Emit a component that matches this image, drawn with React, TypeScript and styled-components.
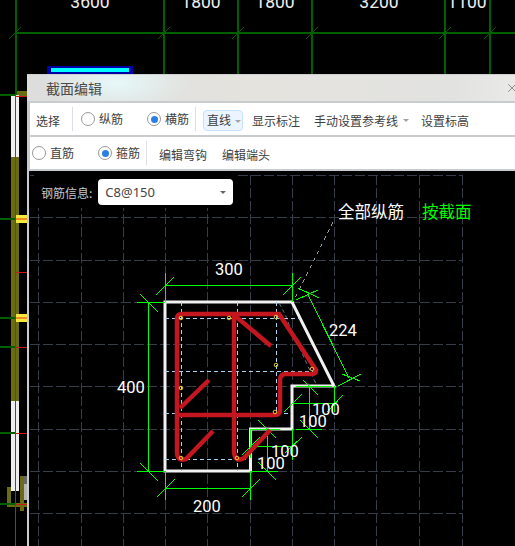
import React from "react";
import styled, { createGlobalStyle } from "styled-components";
import { X } from "lucide-react";

const GlobalStyle = createGlobalStyle`
  html, body { margin: 0; padding: 0; background: #000; }
  body { font-family: "Noto Sans CJK SC", "Noto Sans", sans-serif; overflow: hidden; }
`;

const Stage = styled.div`
  position: relative;
  width: 515px;
  height: 546px;
  overflow: hidden;
  background: #000;
`;

const Backdrop = styled.svg`
  position: absolute;
  inset: 0;
  display: block;
`;

const Dialog = styled.section`
  position: absolute;
  left: 27px;
  top: 74px;
  width: 500px;
  height: 472px;
  display: flex;
  flex-direction: column;
  background: #c9cccf;
`;

const TitleBar = styled.header`
  flex: 0 0 27px;
  display: flex;
  align-items: center;
  justify-content: space-between;
  padding: 0 8px 0 19px;
  background:
    radial-gradient(ellipse 75px 30px at 90px 8px, #e6f8f8 0%, rgba(230, 248, 248, 0) 100%),
    linear-gradient(90deg, #dcdddc 0%, #e4e3de 45%, #e2e2e0 85%, #ebebea 100%);
  border-top: 1px solid #cfcfcf;
  box-sizing: border-box;
  font-size: 14px;
  color: #4a4a4a;
`;

const CloseIcon = styled(X)`
  color: #777;
`;

const Toolbar = styled.div`
  flex: 0 0 32px;
  margin: 2px 0 0 3px;
  display: flex;
  align-items: center;
  background: #fff;
  color: #404040;
  font-size: 12px;
  line-height: 16px;
`;

const ToolLabel = styled.span<{ $ml: number }>`
  margin-left: ${(p) => p.$ml}px;
  position: relative;
  top: 2px;
  white-space: nowrap;
`;

const Divider = styled.i<{ $ml: number }>`
  flex: 0 0 1px;
  height: 24px;
  margin-left: ${(p) => p.$ml}px;
  background: #dcdfe3;
`;

const RadioItem = styled.label<{ $ml: number }>`
  display: flex;
  align-items: center;
  gap: 4px;
  margin-left: ${(p) => p.$ml}px;
  white-space: nowrap;
`;

const RadioMark = styled.span<{ $on?: boolean }>`
  width: 14px;
  height: 14px;
  box-sizing: border-box;
  border: 1px solid #9a9a9a;
  border-radius: 50%;
  background: #fff;
  display: flex;
  align-items: center;
  justify-content: center;
  &::after {
    content: "";
    width: 7px;
    height: 7px;
    border-radius: 50%;
    background: ${(p) => (p.$on ? "#2b7ee6" : "transparent")};
  }
`;

const Caret = styled.i<{ $ml: number }>`
  margin-left: ${(p) => p.$ml}px;
  width: 0;
  height: 0;
  position: relative;
  top: 1px;
  border-left: 3px solid transparent;
  border-right: 3px solid transparent;
  border-top: 3px solid #a3a3a3;
`;

const ModeButton = styled.button`
  width: 40px;
  height: 21px;
  margin-left: 7px;
  position: relative;
  top: 1px;
  padding: 0 0 0 3px;
  box-sizing: border-box;
  display: flex;
  align-items: center;
  border: 1px solid #c6e2ff;
  border-radius: 4px;
  background: #ecf5ff;
  color: #404040;
  font: inherit;
`;

const Canvas = styled.div`
  flex: 1;
  position: relative;
  margin: 2px 0 0 2px;
  background: #000;
`;

const Drawing = styled.svg`
  position: absolute;
  inset: 0;
  display: block;
`;

const FormRow = styled.div`
  position: relative;
  display: flex;
  align-items: center;
  width: 204px;
  height: 37px;
  margin-left: 5px;
  padding: 8px 0 3px 7px;
  box-sizing: border-box;
  background: #000;
  color: #c4c8cc;
  font-size: 12px;
`;

const FormLabel = styled.span`
  flex: 0 0 51px;
  white-space: nowrap;
`;

const SelectBox = styled.div`
  flex: 0 0 135px;
  height: 26px;
  margin-left: 6px;
  padding: 0 7px;
  box-sizing: border-box;
  display: flex;
  align-items: center;
  justify-content: space-between;
  background: #fff;
  border-radius: 4px;
  color: #444;
  font-family: "Noto Sans", sans-serif;
  font-size: 13px;
`;

const SelectCaret = styled.i`
  width: 0;
  height: 0;
  border-left: 3px solid transparent;
  border-right: 3px solid transparent;
  border-top: 3px solid #666;
`;

const Seg = styled.line<{ $c: string; $w?: number; $dash?: string }>`
  stroke: ${(p) => p.$c};
  stroke-width: ${(p) => p.$w ?? 1};
  stroke-dasharray: ${(p) => p.$dash ?? "none"};
  shape-rendering: crispEdges;
`;

const Rebar = styled.path`
  fill: none;
  stroke: #c4161f;
  stroke-width: 4.5;
`;

const Outline = styled.polygon`
  fill: none;
  stroke: #f2f2f2;
  stroke-width: 3;
`;

const Node = styled.circle`
  fill: none;
  stroke: #e8c830;
  stroke-width: 1;
`;

const OffsetPath = styled.path`
  fill: none;
  stroke: #64758a;
  stroke-width: 1;
  stroke-dasharray: 4 3;
`;

const Dim = styled.text<{ $size?: number; $fill?: string; $anchor?: string }>`
  font-family: ${(p) => (p.$anchor === "start" ? '"Noto Sans CJK SC"' : "Roboto")}, sans-serif;
  font-weight: 400;
  font-size: ${(p) => p.$size ?? 16.5}px;
  fill: ${(p) => p.$fill ?? "#ffffff"};
  text-anchor: ${(p) => p.$anchor ?? "middle"};
`;

const Block = styled.rect<{ $c: string }>`
  fill: ${(p) => p.$c};
  shape-rendering: crispEdges;
`;

type L = [number, number, number, number];

const DARK_GREEN = "#006000";
const backLines: L[] = [
  [16, 0, 16, 95], [164, 0, 164, 74], [238, 0, 238, 74],
  [312, 0, 312, 74], [445, 0, 445, 74], [490, 0, 490, 74],
  [9, 39, 21, 27], [158, 39, 170, 27], [232, 39, 244, 27], [306, 39, 318, 27],
  [439, 39, 451, 27], [484, 39, 496, 27],
  [0, 95, 16, 95], [0, 219, 15, 219], [0, 318, 15, 318], [0, 347, 15, 347],
  [0, 433, 15, 433], [0, 504, 15, 504],
];
const redLines: L[] = [
  [15, 95, 15, 546], [16, 96, 27, 96], [15, 272, 27, 272], [15, 347, 27, 347],
  [15, 433, 27, 433], [15, 504, 27, 504],
];
type R = [number, number, number, number, string];
const blocks: R[] = [
  [16, 32, 499, 2, DARK_GREEN],
  [16, 91, 11, 5, "#6b6b14"], [11, 95, 8, 62, "#f0f0f0"], [11, 157, 8, 244, "#6b6b14"],
  [16, 215, 11, 8, "#f4e83c"], [16, 218, 11, 2, "#f08a24"],
  [16, 314, 11, 8, "#f4e83c"], [16, 317, 11, 2, "#f08a24"], [11, 401, 8, 90, "#eeeeee"],
  [7, 487, 4, 20, "#6b6b14"], [7, 503, 20, 4, "#6b6b14"], [20, 476, 4, 35, "#6b6b14"],
  [24, 476, 3, 8, "#666666"], [24, 484, 3, 16, "#b4b4b4"],
  [47, 66, 86, 8, "#0000a8"], [51, 68, 78, 4, "#00ffff"],
];

const tops = [
  { t: "3600", x: 90 }, { t: "1800", x: 201 }, { t: "1800", x: 275 },
  { t: "3200", x: 379 }, { t: "1100", x: 467 },
];

const gridX = [38, 81, 123, 165, 207, 250, 292, 334, 376, 419, 462];
const gridY = [175, 217, 260, 302, 344, 386, 429, 471, 513];

const guides: L[] = [
  [165, 318, 300, 318], [165, 371, 315, 371], [165, 413, 292, 413], [165, 459, 250, 459],
  [181, 302, 181, 471], [237, 302, 237, 471], [276, 302, 276, 413],
];

const dims: L[] = [
  // 300
  [165, 285, 292, 285], [165, 273, 165, 302], [292, 273, 292, 302], [156, 295, 174, 277], [283, 295, 301, 277],
  // 400
  [148, 302, 148, 471], [137, 302, 165, 302], [137, 471, 165, 471], [140, 294, 158, 312], [140, 463, 158, 481],
  // 200
  [165, 488, 250, 488], [165, 471, 165, 500], [250, 471, 250, 500], [157, 497, 175, 479], [242, 497, 260, 479],
  // 224
  [308, 295, 349, 378], [296, 300, 318, 290], [298, 288, 319, 298], [338, 386, 361, 374], [342, 374, 360, 381],
  // 100 upper right
  [296, 386, 332, 386], [309, 386, 309, 429], [303, 380, 318, 395], [296, 429, 322, 429], [300, 420, 318, 438],
  [292, 403, 334, 403], [334, 386, 334, 412], [284, 412, 302, 394], [327, 412, 343, 395],
  // 100 lower left
  [250, 429, 280, 429], [267, 429, 267, 471], [258, 420, 276, 438], [250, 446, 292, 446], [292, 429, 292, 460],
  [250, 429, 250, 458], [242, 455, 260, 437], [285, 453, 302, 437], [250, 471, 278, 471], [258, 462, 276, 480],
];

const nodes = [
  [181, 318], [229, 318], [276, 317], [276, 365], [312, 369],
  [181, 388], [181, 458], [237, 458], [275, 412],
];

const labels = [
  { t: "300", x: 229, y: 275 }, { t: "400", x: 131, y: 393 }, { t: "200", x: 207, y: 512 },
  { t: "224", x: 343, y: 336 }, { t: "100", x: 326, y: 415 }, { t: "100", x: 313, y: 427 },
  { t: "100", x: 285, y: 457 }, { t: "100", x: 271, y: 469 },
];

export default function App() {
  return (
    <Stage>
      <GlobalStyle />
      <Backdrop width={515} height={546} viewBox="0 0 515 546">
        {blocks.map(([x, y, w, h, c], i) => (
          <Block key={i} x={x} y={y} width={w} height={h} $c={c} />
        ))}
        {backLines.map(([x1, y1, x2, y2], i) => (
          <Seg key={i} x1={x1} y1={y1} x2={x2} y2={y2} $c={DARK_GREEN} $w={1.2} />
        ))}
        {redLines.map(([x1, y1, x2, y2], i) => (
          <Seg key={i} x1={x1} y1={y1} x2={x2} y2={y2} $c="#c81818" />
        ))}
        {tops.map((d) => (
          <Dim key={d.x} x={d.x} y={8} $size={17.5} $fill="#eeeeee">{d.t}</Dim>
        ))}
      </Backdrop>

      <Dialog>
        <TitleBar>
          <span>截面编辑</span>
          <CloseIcon size={14} strokeWidth={1.4} />
        </TitleBar>

        <Toolbar>
          <ToolLabel $ml={6}>选择</ToolLabel>
          <Divider $ml={12} />
          <RadioItem $ml={8}><RadioMark />纵筋</RadioItem>
          <RadioItem $ml={24}><RadioMark $on />横筋</RadioItem>
          <Divider $ml={6} />
          <ModeButton>直线<Caret $ml={4} /></ModeButton>
          <ToolLabel $ml={9}>显示标注</ToolLabel>
          <ToolLabel $ml={14}>手动设置参考线</ToolLabel>
          <Caret $ml={5} />
          <ToolLabel $ml={12}>设置标高</ToolLabel>
        </Toolbar>

        <Toolbar>
          <RadioItem $ml={2}><RadioMark />直筋</RadioItem>
          <RadioItem $ml={24}><RadioMark $on />箍筋</RadioItem>
          <Divider $ml={6} />
          <ToolLabel $ml={12}>编辑弯钩</ToolLabel>
          <ToolLabel $ml={15}>编辑端头</ToolLabel>
        </Toolbar>

        <Canvas>
          <Drawing width={498} height={375} viewBox="29 171 498 375">
            {gridY.map((y) => (
              <Seg key={y} x1={30} y1={y} x2={462} y2={y} $c="#363c48" $dash="10 3" />
            ))}
            {gridX.map((x) => (
              <Seg key={x} x1={x} y1={175} x2={x} y2={546} $c="#363c48" $dash="10 3" />
            ))}
            <Seg x1={333} y1={222} x2={293} y2={302} $c="#9a9a9a" $dash="4 4" />
            <Outline points="165,302 292,302 334,386 292,386 292,429 250.5,429 250.5,471 165,471" />
            <OffsetPath d="M279 303 Q286 315 288 322 L316 384" />
            {dims.map(([x1, y1, x2, y2], i) => (
              <Seg key={i} x1={x1} y1={y1} x2={x2} y2={y2} $c="#00ff00" />
            ))}
            {guides.map(([x1, y1, x2, y2], i) => (
              <Seg key={i} x1={x1} y1={y1} x2={x2} y2={y2} $c="#a9d3f2" $dash="4 3" />
            ))}
            <Rebar d="M177 319 Q177 314 182 314 H279 L316 370 Q316 374 312 374 H286 Q280 374 280 380 V410 Q280 415 275 415 H177" />
            <Rebar d="M177 319 V452 Q177 462 186 459 L213 431" />
            <Rebar d="M234 314 V452 Q235 463 244 458 L270 430" />
            <Rebar d="M180 408 L209 380" />
            <Rebar d="M234 315 L271 346" />
            {nodes.map(([cx, cy], i) => (
              <Node key={i} cx={cx} cy={cy} r={1.8} />
            ))}
            {labels.map((l, i) => (
              <Dim key={i} x={l.x} y={l.y}>{l.t}</Dim>
            ))}
            <Dim x={338} y={218} $anchor="start" $size={16.5}>全部纵筋</Dim>
            <Dim x={422} y={218} $anchor="start" $size={16.5} $fill="#00ff00">按截面</Dim>
          </Drawing>
          <FormRow>
            <FormLabel>钢筋信息:</FormLabel>
            <SelectBox>
              <span>C8@150</span>
              <SelectCaret />
            </SelectBox>
          </FormRow>
        </Canvas>
      </Dialog>
    </Stage>
  );
}
